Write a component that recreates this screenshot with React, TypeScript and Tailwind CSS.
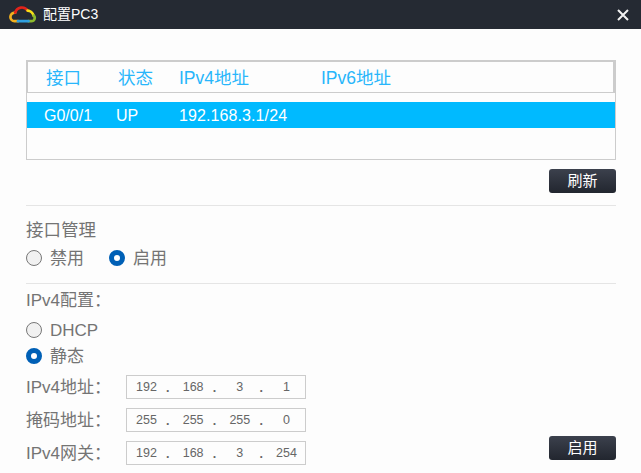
import React from "react"

const FONT = "[font-family:'Liberation_Sans','Noto_Sans_CJK_SC',sans-serif]"

const CloudLogo = () => (
  <svg width="28" height="17" viewBox="0 0 28 17" fill="none" strokeWidth="2.7" strokeLinecap="round">
    <path d="M9 15.2H5.5A4.3 4.3 0 0 1 1.4 11A4.4 4.4 0 0 1 6.2 6.6" stroke="#f2b01e" />
    <path d="M6.2 6.6A6.9 6.9 0 0 1 18.6 4.6" stroke="#e2231a" />
    <path d="M18.6 4.6C21 4.6 23.8 6.6 24.6 9.6" stroke="#f7e017" />
    <path d="M24.6 9.6C26.8 11.6 25.6 15.2 22.4 15.2H19.5" stroke="#8cb92d" />
    <path d="M9 15.2H19.5" stroke="#2f9fe0" />
  </svg>
)

const Radio = ({ checked, label }: { checked?: boolean; label: string }) => (
  <div className="flex items-center h-6">
    {checked ? (
      <span className="w-4 h-4 rounded-full border-[5px] border-[#0060b6] bg-white" />
    ) : (
      <span className="w-4 h-4 rounded-full border-[1.5px] border-[#777] bg-[#f1f1f1]" />
    )}
    <span className="ml-2 translate-y-px text-[17px] leading-6 text-[#747474]">{label}</span>
  </div>
)

const DarkButton = ({ label }: { label: string }) => (
  <button className="w-[67px] h-6 rounded-[3px] bg-gradient-to-b from-[#3c414d] to-[#22262f] text-white text-[15px] leading-6">
    {label}
  </button>
)

const IpRow = ({ label, parts }: { label: string; parts: string[] }) => (
  <div className="flex items-center h-6">
    <div className="w-[100px] translate-y-px text-[17px] text-[#747474]">{label}</div>
    <div className="w-[180px] h-6 border border-[#ccc] flex items-center text-[12.5px] text-[#666]">
      {parts.map((p, i) => (
        <React.Fragment key={i}>
          <span className="w-[38px] text-center ml-[2px] first:ml-[1px]">{p}</span>
          {i < 3 && <span className="w-2 pt-[3px] -translate-x-px text-center font-bold">.</span>}
        </React.Fragment>
      ))}
    </div>
  </div>
)

export default function App() {
  return (
    <div className={`w-[641px] h-[473px] overflow-hidden bg-[#fdfdfd] ${FONT}`}>
      <div className="h-[29px] bg-[#252a33] flex items-center pl-[9px] pr-3">
        <CloudLogo />
        <span className="ml-[6px] text-[14px] text-white">配置PC3</span>
        <svg className="ml-auto" width="12" height="12" viewBox="0 0 12 12" stroke="#f2f2f2" strokeWidth="2">
          <path d="M1 1L11 11M11 1L1 11" />
        </svg>
      </div>

      <div className="pl-[26px] pr-[25px]">
        <div className="mt-[31px] h-[100px] border border-[#ccc]">
          <div className="h-[32px] border-2 border-b border-[#ccc] border-l-[1px] border-t-[1px] flex items-center pl-[18px] pt-[2px] text-[17.5px] text-[#28b6fb]">
            <span className="w-[72px]">接口</span>
            <span className="w-[61px]">状态</span>
            <span className="w-[142px]">IPv4地址</span>
            <span>IPv6地址</span>
          </div>
          <div className="mt-[9px] h-[26px] bg-[#00baff] flex items-center pl-[17px] pt-[2px] text-[16px] text-white">
            <span className="w-[72px]">G0/0/1</span>
            <span className="w-[63px]">UP</span>
            <span className="tracking-[0.1px]">192.168.3.1/24</span>
          </div>
        </div>

        <div className="mt-[9px] flex justify-end">
          <DarkButton label="刷新" />
        </div>

        <div className="mt-3 h-px bg-[#e5e5e5]" />
        <div className="mt-3 h-6 text-[17.5px] leading-6 text-[#747474]">接口管理</div>
        <div className="mt-1 flex gap-[25px]">
          <Radio label="禁用" />
          <Radio checked label="启用" />
        </div>

        <div className="mt-[13px] h-px bg-[#e5e5e5]" />
        <div className="mt-[6px] h-[22px] text-[17px] leading-[22px] text-[#747474]">IPv4配置：</div>
        <div className="mt-[6px]">
          <Radio label="DHCP" />
        </div>
        <div className="mt-[2px]">
          <Radio checked label="静态" />
        </div>

        <div className="mt-[7px] flex justify-between items-end">
          <div className="flex flex-col gap-[9px]">
            <IpRow label="IPv4地址：" parts={["192", "168", "3", "1"]} />
            <IpRow label="掩码地址：" parts={["255", "255", "255", "0"]} />
            <IpRow label="IPv4网关：" parts={["192", "168", "3", "254"]} />
          </div>
          <div className="mb-[5px]">
            <DarkButton label="启用" />
          </div>
        </div>
      </div>
    </div>
  )
}
